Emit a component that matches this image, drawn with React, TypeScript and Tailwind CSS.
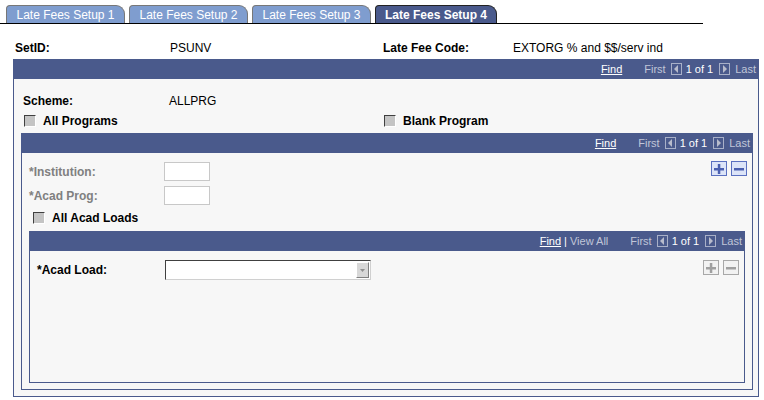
import React from "react";

const HEAD = "bg-[#4a5a8c]";

// --- Pequenos componentes ---
const Tab = ({ label, active }: { label: string; active?: boolean }) => (
  <div
    className={
      "h-[18px] w-[119px] flex items-center justify-center rounded-tl-[4px] rounded-tr-[9px] border border-b-0 text-[12px] leading-none " +
      (active
        ? "bg-[#4a5a8c] border-[#222] text-white font-bold w-[122px]"
        : "bg-[#7f9dcf] border-[#777] text-white")
    }
  >
    {label}
  </div>
);

const Check = () => (
  <span className="inline-block w-[12px] h-[12px] bg-[#c4c4c4] border border-t-[#404040] border-l-[#404040] border-r-white border-b-white shrink-0" />
);

const NavArrow = ({ dir }: { dir: "l" | "r" }) => (
  <span className="inline-flex w-[11px] h-[12px] border border-[#a8b0c8] items-center justify-center">
    <svg width="7" height="8" viewBox="0 0 7 8">
      {dir === "l" ? (
        <polygon points="5,0 5,8 1,4" fill="#b8bccc" />
      ) : (
        <polygon points="2,0 2,8 6,4" fill="#b8bccc" />
      )}
    </svg>
  </span>
);

const Header = ({ viewAll }: { viewAll?: boolean }) => (
  <div className={HEAD + " h-[20px] flex items-center justify-end pr-[3px] text-[11px] leading-none"}>
    <span className="text-white underline">Find</span>
    {viewAll && (
      <>
        <span className="text-white mx-[3px]">|</span>
        <span className="text-[#c0c6d8]">View All</span>
      </>
    )}
    <span className="text-[#c0c6d8] ml-[22px]">First</span>
    <span className="ml-[5px]">
      <NavArrow dir="l" />
    </span>
    <span className="text-white ml-[4px]">1 of 1</span>
    <span className="ml-[6px]">
      <NavArrow dir="r" />
    </span>
    <span className="text-[#c0c6d8] ml-[5px]">Last</span>
  </div>
);

const RowBtn = ({ kind, enabled }: { kind: "+" | "-"; enabled?: boolean }) => {
  const c = enabled ? "#4a5fb0" : "#a0a0a0";
  return (
    <span
      className={
        "inline-flex w-[16px] h-[15px] items-center justify-center border " +
        (enabled ? "border-[#5a70c0] bg-[#dce4f8]" : "border-[#a8a8a8] bg-[#f2f2f2]")
      }
    >
      <svg width="10" height="10" viewBox="0 0 10 10">
        <rect x="0" y="4" width="10" height="2.5" fill={c} />
        {kind === "+" && <rect x="3.8" y="0" width="2.5" height="10" fill={c} />}
      </svg>
    </span>
  );
};

export default function App() {
  return (
    <div className="w-[764px] h-[400px] bg-white text-[12px] text-black font-['Liberation_Sans',Arial,sans-serif] overflow-hidden">
      {/* Abas */}
      <div className="pt-[5px] w-[703px] border-b border-black flex gap-[4px] pl-[6px]">
        <Tab label="Late Fees Setup 1" />
        <Tab label="Late Fees Setup 2" />
        <Tab label="Late Fees Setup 3" />
        <Tab label="Late Fees Setup 4" active />
      </div>

      {/* SetID */}
      <div className="flex items-center h-[16px] mt-[16px] pl-[15px]">
        <span className="w-[155px] font-bold">SetID:</span>
        <span className="w-[213px]">PSUNV</span>
        <span className="w-[130px] font-bold">Late Fee Code:</span>
        <span>EXTORG % and $$/serv ind</span>
      </div>

      {/* Caixa principal */}
      <div className="ml-[13px] mt-[3px] w-[746px]">
        <Header />
        <div className="h-[318px] border border-t-0 border-[#4a5a8c] bg-[#f7f7f7] flex flex-col">
          <div className="flex items-center h-[14px] mt-[15px] pl-[9px]">
            <span className="w-[146px] font-bold">Scheme:</span>
            <span>ALLPRG</span>
          </div>
          <div className="flex items-center h-[14px] mt-[6px] pl-[10px]">
            <div className="w-[360px] flex items-center gap-[7px]">
              <Check />
              <span className="font-bold">All Programs</span>
            </div>
            <div className="flex items-center gap-[7px]">
              <Check />
              <span className="font-bold">Blank Program</span>
            </div>
          </div>

          {/* Caixa interna 1 */}
          <div className="ml-[7px] mr-[5px] mt-[5px] flex flex-col">
            <Header />
            <div className="h-[237px] border border-t-0 border-[#4a5a8c] bg-[#f7f7f7] flex flex-col">
              <div className="flex pt-[8px] pr-[5px]">
                <div className="flex-1 flex flex-col">
                  <div className="flex items-center h-[19px] pl-[7px] mt-[1px]">
                    <span className="w-[135px] font-bold text-[#808080]">*Institution:</span>
                    <span className="w-[46px] h-[19px] border border-[#c8c8c8] bg-white" />
                  </div>
                  <div className="flex items-center h-[19px] pl-[7px] mt-[5px]">
                    <span className="w-[135px] font-bold text-[#808080]">*Acad Prog:</span>
                    <span className="w-[46px] h-[19px] border border-[#c8c8c8] bg-white" />
                  </div>
                  <div className="flex items-center gap-[7px] h-[12px] pl-[11px] mt-[7px]">
                    <Check />
                    <span className="font-bold">All Acad Loads</span>
                  </div>
                </div>
                <div className="flex gap-[4px]">
                  <RowBtn kind="+" enabled />
                  <RowBtn kind="-" enabled />
                </div>
              </div>

              {/* Caixa interna 2 */}
              <div className="ml-[7px] mr-[7px] mt-[7px] flex flex-col">
                <Header viewAll />
                <div className="h-[132px] border border-t-0 border-[#4a5a8c] bg-[#f7f7f7] flex pt-[9px] pr-[5px]">
                  <div className="flex-1 flex items-start pl-[7px]">
                    <span className="w-[128px] h-[20px] flex items-center font-bold">*Acad Load:</span>
                    <span className="w-[206px] h-[20px] border border-t-[#404040] border-l-[#404040] border-r-[#d0d0d0] border-b-[#d0d0d0] bg-white flex justify-end items-stretch p-[1px]">
                      <span className="w-[13px] bg-[#d8d8d8] border border-t-white border-l-white border-r-[#808080] border-b-[#808080] flex items-center justify-center">
                        <svg width="5" height="3" viewBox="0 0 5 3">
                          <polygon points="0,0 5,0 2.5,3" fill="#909090" />
                        </svg>
                      </span>
                    </span>
                  </div>
                  <div className="flex gap-[4px]">
                    <RowBtn kind="+" />
                    <RowBtn kind="-" />
                  </div>
                </div>
              </div>
            </div>
          </div>
        </div>
      </div>
    </div>
  );
}
